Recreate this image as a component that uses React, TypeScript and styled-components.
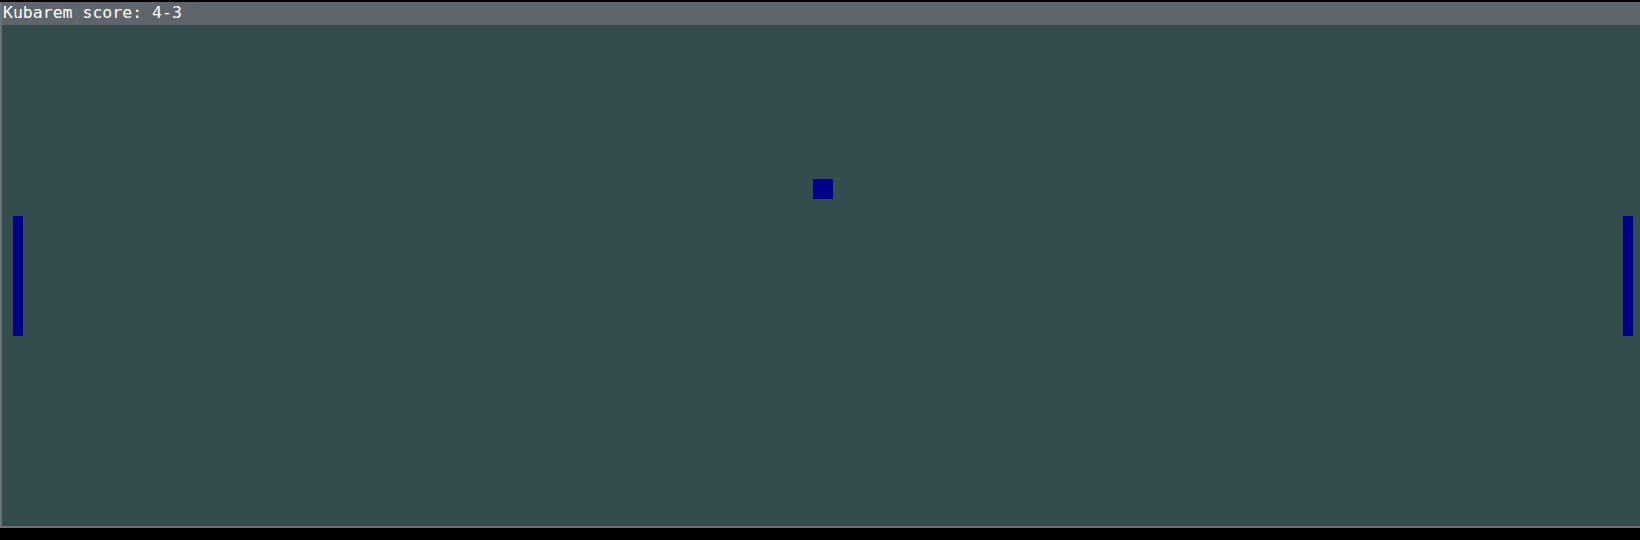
import styled, { createGlobalStyle } from 'styled-components';

const GlobalStyle = createGlobalStyle`
  html, body {
    margin: 0;
    padding: 0;
    background: #000;
    overflow: hidden;
  }
`;

type Piece = { x: number; y: number; w: number; h: number };

const leftPaddle: Piece = { x: 11, y: 190, w: 10, h: 120 };
const rightPaddle: Piece = { x: 1621, y: 190, w: 10, h: 120 };
const ball: Piece = { x: 811, y: 153, w: 20, h: 20 };

export default function App() {
  return (
    <>
      <GlobalStyle />
      <StScreen>
        <StWindow>
          <StTitleBar>Kubarem score: 4-3</StTitleBar>
          <StBoard>
            <StBlock $p={leftPaddle} />
            <StBlock $p={ball} />
            <StBlock $p={rightPaddle} />
          </StBoard>
        </StWindow>
      </StScreen>
    </>
  );
}

const StScreen = styled.main`
  width: 1640px;
  height: 540px;
  padding-top: 2px;
  box-sizing: border-box;
  background: #000;
`;

const StWindow = styled.section`
  display: flex;
  flex-direction: column;
  width: 1660px;
  border-left: 2px solid #6b7178;
  border-bottom: 2px solid #6b7178;
`;

const StTitleBar = styled.header`
  height: 23px;
  padding-left: 1px;
  border-bottom: 1px solid #3d4247;
  background: #5e656c;
  color: #fff;
  font-family: 'DejaVu Sans Mono', monospace;
  font-size: 16.5px;
  line-height: 22px;
  white-space: pre;
`;

const StBoard = styled.div`
  position: relative;
  height: 500px;
  background: #344c4d;
`;

const StBlock = styled.div<{ $p: Piece }>`
  position: absolute;
  left: ${({ $p }) => $p.x}px;
  top: ${({ $p }) => $p.y}px;
  width: ${({ $p }) => $p.w}px;
  height: ${({ $p }) => $p.h}px;
  background: #00008b;
`;
